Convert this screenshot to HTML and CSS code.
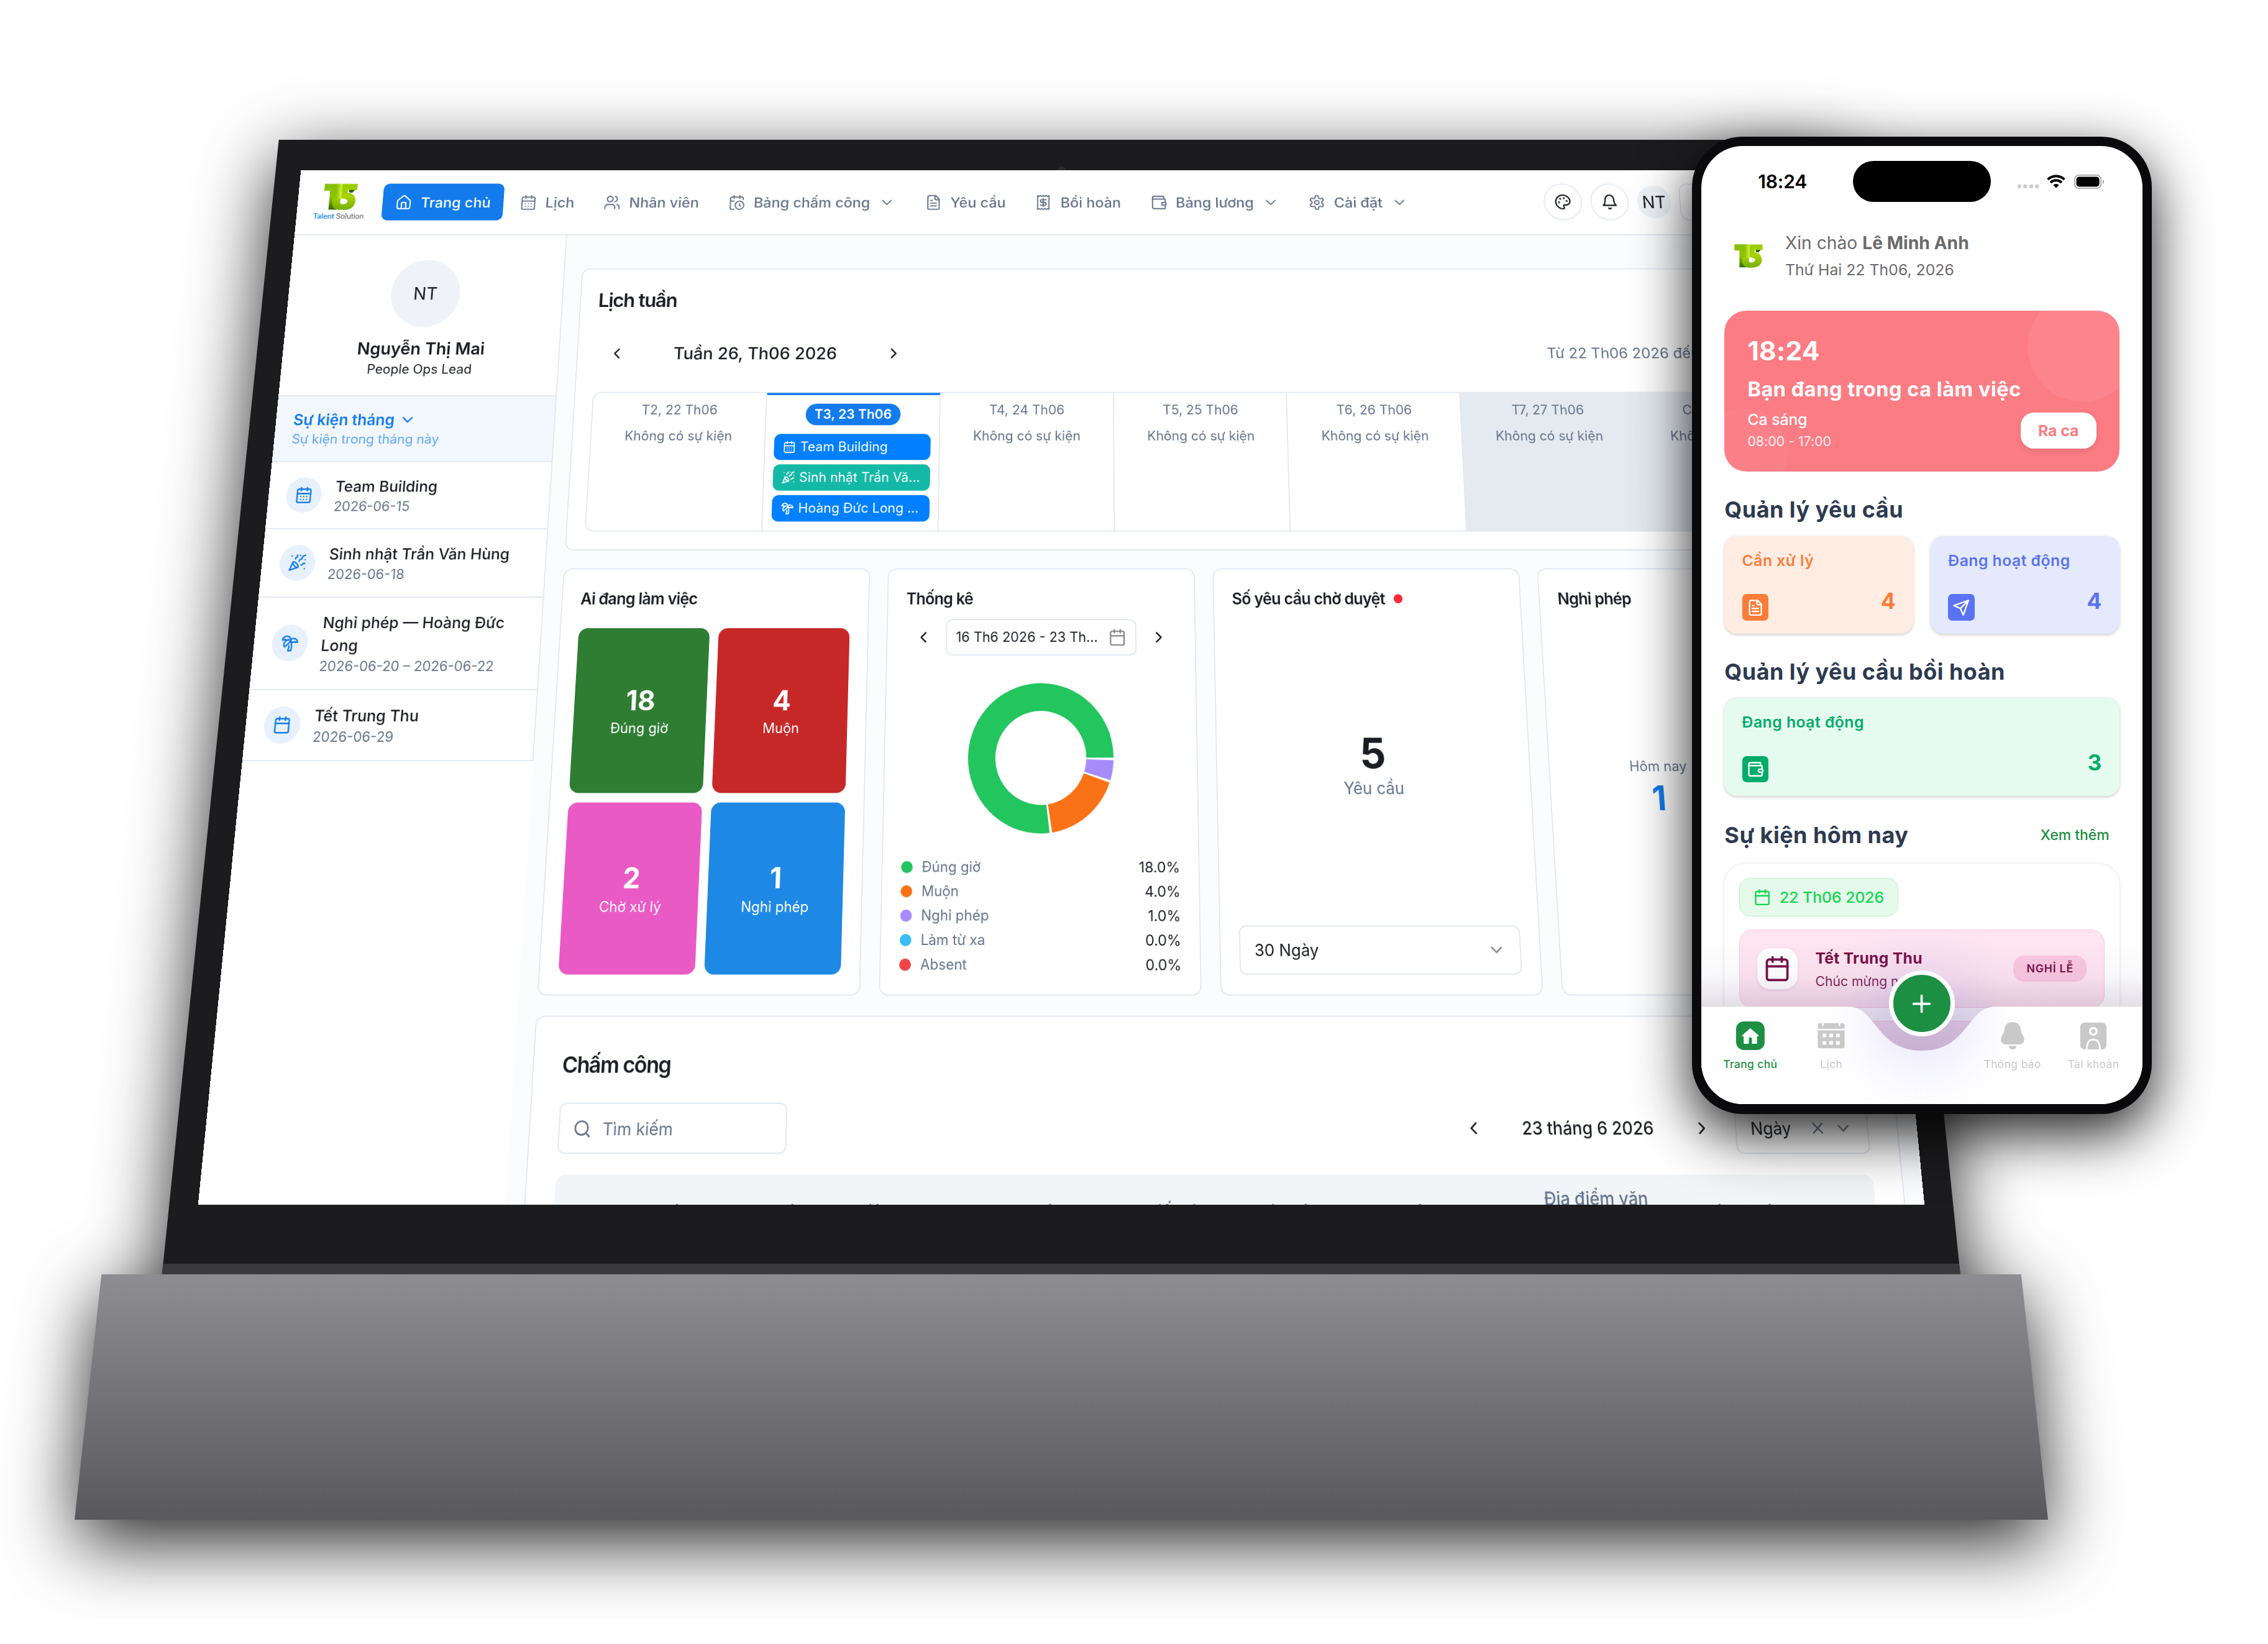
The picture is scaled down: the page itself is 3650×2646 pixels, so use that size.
FILE: index.html
```html
<!DOCTYPE html>
<html lang="vi">
<head>
<meta charset="utf-8">
<title>Talent Solution</title>
<link rel="stylesheet" href="styles.css">
</head>
<body>
<svg class="sprite" aria-hidden="true">
  <symbol id="home" viewBox="0 0 24 24"><path d="M15 21v-8a1 1 0 0 0-1-1h-4a1 1 0 0 0-1 1v8"/><path d="M3 10a2 2 0 0 1 .709-1.528l7-6a2 2 0 0 1 2.582 0l7 6A2 2 0 0 1 21 10v9a2 2 0 0 1-2 2H5a2 2 0 0 1-2-2z"/></symbol>
  <symbol id="cal" viewBox="0 0 24 24"><path d="M8 2v4M16 2v4M3 10h18"/><rect x="3" y="4" width="18" height="18" rx="2"/></symbol>
  <symbol id="caldays" viewBox="0 0 24 24"><path d="M8 2v4M16 2v4M3 10h18M8 14h.01M12 14h.01M16 14h.01M8 18h.01M12 18h.01M16 18h.01"/><rect x="3" y="4" width="18" height="18" rx="2"/></symbol>
  <symbol id="users" viewBox="0 0 24 24"><path d="M16 21v-2a4 4 0 0 0-4-4H6a4 4 0 0 0-4 4v2M22 21v-2a4 4 0 0 0-3-3.87M16 3.13a4 4 0 0 1 0 7.75"/><circle cx="9" cy="7" r="4"/></symbol>
  <symbol id="calclock" viewBox="0 0 24 24"><path d="M21 7.5V6a2 2 0 0 0-2-2H5a2 2 0 0 0-2 2v14a2 2 0 0 0 2 2h3.5M16 2v4M8 2v4M3 10h5M17.5 17.5 16 16.3V14"/><circle cx="16" cy="16" r="6"/></symbol>
  <symbol id="file" viewBox="0 0 24 24"><path d="M15 2H6a2 2 0 0 0-2 2v16a2 2 0 0 0 2 2h12a2 2 0 0 0 2-2V7Z"/><path d="M14 2v4a2 2 0 0 0 2 2h4M10 9H8M16 13H8M16 17H8"/></symbol>
  <symbol id="receipt" viewBox="0 0 24 24"><path d="M4 2v20l2-1 2 1 2-1 2 1 2-1 2 1 2-1 2 1V2l-2 1-2-1-2 1-2-1-2 1-2-1-2 1Z"/><path d="M16 8h-6a2 2 0 1 0 0 4h4a2 2 0 1 1 0 4H8M12 17.5v-11"/></symbol>
  <symbol id="wallet" viewBox="0 0 24 24"><path d="M19 7V4a1 1 0 0 0-1-1H5a2 2 0 0 0 0 4h15a1 1 0 0 1 1 1v4h-3a2 2 0 0 0 0 4h3a1 1 0 0 0 1-1v-2a1 1 0 0 0-1-1"/><path d="M3 5v14a2 2 0 0 0 2 2h15a1 1 0 0 0 1-1v-4"/></symbol>
  <symbol id="gear" viewBox="0 0 24 24"><path d="M12.22 2h-.44a2 2 0 0 0-2 2v.18a2 2 0 0 1-1 1.73l-.43.25a2 2 0 0 1-2 0l-.15-.08a2 2 0 0 0-2.73.73l-.22.38a2 2 0 0 0 .73 2.73l.15.1a2 2 0 0 1 1 1.72v.51a2 2 0 0 1-1 1.74l-.15.09a2 2 0 0 0-.73 2.73l.22.38a2 2 0 0 0 2.73.73l.15-.08a2 2 0 0 1 2 0l.43.25a2 2 0 0 1 1 1.73V20a2 2 0 0 0 2 2h.44a2 2 0 0 0 2-2v-.18a2 2 0 0 1 1-1.73l.43-.25a2 2 0 0 1 2 0l.15.08a2 2 0 0 0 2.73-.73l.22-.39a2 2 0 0 0-.73-2.73l-.15-.08a2 2 0 0 1-1-1.74v-.5a2 2 0 0 1 1-1.74l.15-.09a2 2 0 0 0 .73-2.73l-.22-.38a2 2 0 0 0-2.73-.73l-.15.08a2 2 0 0 1-2 0l-.43-.25a2 2 0 0 1-1-1.73V4a2 2 0 0 0-2-2z"/><circle cx="12" cy="12" r="3"/></symbol>
  <symbol id="down" viewBox="0 0 24 24"><path d="m6 9 6 6 6-6"/></symbol>
  <symbol id="left" viewBox="0 0 24 24"><path d="m15 18-6-6 6-6"/></symbol>
  <symbol id="right" viewBox="0 0 24 24"><path d="m9 18 6-6-6-6"/></symbol>
  <symbol id="close" viewBox="0 0 24 24"><path d="M18 6 6 18M6 6l12 12"/></symbol>
  <symbol id="search" viewBox="0 0 24 24"><circle cx="11" cy="11" r="8"/><path d="m21 21-4.3-4.3"/></symbol>
  <symbol id="palette" viewBox="0 0 24 24"><circle cx="13.5" cy="6.5" r=".5"/><circle cx="17.5" cy="10.5" r=".5"/><circle cx="8.5" cy="7.5" r=".5"/><circle cx="6.5" cy="12.5" r=".5"/><path d="M12 2C6.500 2 2 6.500 2 12s4.500 10 10 10c.926 0 1.648-.746 1.648-1.688 0-.437-.18-.835-.437-1.125-.29-.289-.438-.652-.438-1.125a1.640 1.640 0 0 1 1.668-1.668h1.996c3.051 0 5.555-2.503 5.555-5.554C21.965 6.012 17.461 2 12 2z"/></symbol>
  <symbol id="bell" viewBox="0 0 24 24"><path d="M6 8a6 6 0 0 1 12 0c0 7 3 9 3 9H3s3-2 3-9M10.300 21a1.940 1.940 0 0 0 3.400 0"/></symbol>
  <symbol id="party" viewBox="0 0 24 24"><path d="M5.800 11.300 2 22l10.700-3.790M4 3h.01M22 8h.01M15 2h.01M22 20h.01"/><path d="m22 2-2.240.75a2.900 2.900 0 0 0-1.960 3.120c.1.86-.57 1.630-1.450 1.630h-.38c-.86 0-1.600.6-1.760 1.440L14 10M22 13l-.82-.33c-.86-.34-1.820.2-1.980 1.110c-.11.7-.72 1.220-1.430 1.220H17M11 2l.33.82c.34.86-.2 1.820-1.110 1.980C9.520 4.900 9 5.520 9 6.230V7"/><path d="M11 13c1.930 1.930 2.830 4.170 2 5-.83.83-3.070-.07-5-2-1.930-1.930-2.830-4.170-2-5 .83-.83 3.070.07 5 2Z"/></symbol>
  <symbol id="palm" viewBox="0 0 24 24"><path d="M13 8c0-2.760-2.460-5-5.500-5S2 5.240 2 8h2l1-1 1 1h4"/><path d="M13 7.140A5.820 5.820 0 0 1 16.500 6c3.040 0 5.500 2.240 5.500 5h-3l-1-1-1 1h-3"/><path d="M5.890 9.710c-2.150 2.150-2.300 5.470-.35 7.430l4.240-4.250.7-.7.71-.71 2.120-2.120c-1.950-1.960-5.270-1.800-7.420.35"/><path d="M11 15.500c.5 2.500-.17 4.500-1 6.500h4c2-5.500-.5-12-1-14"/></symbol>
  <symbol id="send" viewBox="0 0 24 24"><path d="m22 2-7 20-4-9-9-4ZM22 2 11 13"/></symbol>
  <symbol id="logo" viewBox="0 0 31 26">
    <defs>
      <linearGradient id="lg1" x1="0" y1="0" x2="0" y2="1"><stop offset="0" stop-color="#84bd00"/><stop offset=".5" stop-color="#8fc400"/><stop offset="1" stop-color="#2f6d0a"/></linearGradient>
      <linearGradient id="lg2" x1="0" y1="0" x2="0" y2="1"><stop offset="0" stop-color="#9ccc00"/><stop offset=".5" stop-color="#a3d300"/><stop offset="1" stop-color="#74ae00"/></linearGradient>
      <linearGradient id="lg3" x1="0" y1="0" x2="1" y2="0"><stop offset="0" stop-color="#8cc400"/><stop offset="1" stop-color="#d6ef4a"/></linearGradient>
    </defs>
    <path fill="url(#lg1)" stroke="none" d="M0 .2H13V25.500H5.500V7H0z"/>
    <path fill="#1f5a12" d="M23.500 6H29l-2.400 3-3.100-.4z"/>
    <path fill="url(#lg2)" fill-rule="evenodd" d="M15.500.3H31V6.300H23.200c-.7 0-1 .4-1 1V9C27.200 9.300 30.200 12.300 30.200 17.200 30.200 22.500 26.300 25.800 20 25.800H16C11 25.800 8.500 22.500 8.500 18V14H15.500zM17.600 14.200c-1 .8-1.900 2.200-1.900 3.600 0 1.600 1.100 2.400 3 2.400 2.400 0 4-.9 4-2.700 0-1.900-1.700-2.300-3.200-2.500z"/>
    <path fill="url(#lg3)" d="M11.500.3h5.200V15.500c-2.400-.4-5.200-2-5.200-6z"/>
  </symbol>
</svg>

<main class="stage">
  <div class="laptop-shadow"><div class="laptop">
    <div class="lid"></div>
    <div class="hinge"></div>
    <div class="base"></div>
    <span class="camera"></span>
  </div></div>

  <div class="screen"><div class="app">
    <header class="topbar">
      <div class="brand"><svg class="brand-mark"><use href="#logo"/></svg><span class="brand-name"><b>Talent</b> Solution</span></div>
      <nav class="menu">
        <a class="menu-item active"><svg class="ic"><use href="#home"/></svg>Trang chủ</a>
        <a class="menu-item"><svg class="ic"><use href="#caldays"/></svg>Lịch</a>
        <a class="menu-item"><svg class="ic"><use href="#users"/></svg>Nhân viên</a>
        <a class="menu-item"><svg class="ic"><use href="#calclock"/></svg>Bảng chấm công<svg class="ic"><use href="#down"/></svg></a>
        <a class="menu-item"><svg class="ic"><use href="#file"/></svg>Yêu cầu</a>
        <a class="menu-item"><svg class="ic"><use href="#receipt"/></svg>Bồi hoàn</a>
        <a class="menu-item"><svg class="ic"><use href="#wallet"/></svg>Bảng lương<svg class="ic"><use href="#down"/></svg></a>
        <a class="menu-item"><svg class="ic"><use href="#gear"/></svg>Cài đặt<svg class="ic"><use href="#down"/></svg></a>
      </nav>
      <div class="tools">
        <span class="round"><svg class="ic"><use href="#palette"/></svg></span>
        <span class="round"><svg class="ic"><use href="#bell"/></svg></span>
        <span class="mini">NT</span>
        <span class="lang"></span>
      </div>
    </header>

    <div class="body">
      <aside class="side">
        <div class="side-list">
          <div class="profile"><span class="avatar">NT</span><strong>Nguyễn Thị Mai</strong><small>People Ops Lead</small></div>
          <div class="month"><strong>Sự kiện tháng <svg class="ic"><use href="#down"/></svg></strong><small>Sự kiện trong tháng này</small></div>
          <div class="event"><span class="dot"><svg class="ic"><use href="#caldays"/></svg></span><div><strong>Team Building</strong><small>2026-06-15</small></div></div>
          <div class="event"><span class="dot"><svg class="ic"><use href="#party"/></svg></span><div><strong>Sinh nhật Trần Văn Hùng</strong><small>2026-06-18</small></div></div>
          <div class="event"><span class="dot"><svg class="ic"><use href="#palm"/></svg></span><div><strong>Nghỉ phép — Hoàng Đức<br>Long</strong><small>2026-06-20 – 2026-06-22</small></div></div>
          <div class="event"><span class="dot"><svg class="ic"><use href="#cal"/></svg></span><div><strong>Tết Trung Thu</strong><small>2026-06-29</small></div></div>
        </div>
      </aside>

      <div class="content">
        <section class="card week">
          <h2>Lịch tuần</h2>
          <div class="weeknav">
            <div class="pager"><span class="pg"><svg class="ic"><use href="#left"/></svg></span><b>Tuần 26, Th06 2026</b><span class="pg"><svg class="ic"><use href="#right"/></svg></span></div>
            <span class="range">Từ 22 Th06 2026 đến 28 Th06 2026</span>
          </div>
          <div class="days">
            <div class="day"><span>T2, 22 Th06</span><span>Không có sự kiện</span></div>
            <div class="day today"><b>T3, 23 Th06</b>
              <div class="chip"><svg class="ic"><use href="#caldays"/></svg><span>Team Building</span></div>
              <div class="chip teal"><svg class="ic"><use href="#party"/></svg><span>Sinh nhật Trần Vă...</span></div>
              <div class="chip"><svg class="ic"><use href="#palm"/></svg><span>Hoàng Đức Long ...</span></div>
            </div>
            <div class="day"><span>T4, 24 Th06</span><span>Không có sự kiện</span></div>
            <div class="day"><span>T5, 25 Th06</span><span>Không có sự kiện</span></div>
            <div class="day"><span>T6, 26 Th06</span><span>Không có sự kiện</span></div>
            <div class="day off"><span>T7, 27 Th06</span><span>Không có sự kiện</span></div>
            <div class="day off"><span>CN, 28 Th06</span><span>Không có sự kiện</span></div>
          </div>
        </section>

        <div class="cards">
          <section class="card stat">
            <h3>Ai đang làm việc</h3>
            <div class="tiles">
              <div class="tile green"><b>18</b><span>Đúng giờ</span></div>
              <div class="tile red"><b>4</b><span>Muộn</span></div>
              <div class="tile pink"><b>2</b><span>Chờ xử lý</span></div>
              <div class="tile blue"><b>1</b><span>Nghỉ phép</span></div>
            </div>
          </section>
          <section class="card stat">
            <h3>Thống kê</h3>
            <div class="daterow"><span class="pg"><svg class="ic"><use href="#left"/></svg></span><span class="datebox"><span>16 Th6 2026 - 23 Th...</span><svg class="ic"><use href="#cal"/></svg></span><span class="pg"><svg class="ic"><use href="#right"/></svg></span></div>
            <svg class="donut" viewBox="-65 -65 130 130">
              <path fill="#22c55e" d="M64 0A64 64 0 1 0 7.800 63.520L4.870 39.700A40 40 0 1 1 40 0Z"/>
              <path fill="#f97316" d="M10.010 63.210A64 64 0 0 0 60.370 21.260L37.730 13.290A40 40 0 0 1 6.260 39.510Z"/>
              <path fill="#a78bfa" d="M61.070 19.140A64 64 0 0 0 63.960 2.230L39.980 1.400A40 40 0 0 1 38.170 11.960Z"/>
            </svg>
            <ul class="legend">
              <li><i class="c1"></i>Đúng giờ<b>18.0%</b></li>
              <li><i class="c2"></i>Muộn<b>4.0%</b></li>
              <li><i class="c3"></i>Nghỉ phép<b>1.0%</b></li>
              <li><i class="c4"></i>Làm từ xa<b>0.0%</b></li>
              <li><i class="c5"></i>Absent<b>0.0%</b></li>
            </ul>
          </section>
          <section class="card stat">
            <h3>Số yêu cầu chờ duyệt <i class="alert"></i></h3>
            <div class="total"><b>5</b><span>Yêu cầu</span></div>
            <div class="select">30 Ngày<svg class="ic"><use href="#down"/></svg></div>
          </section>
          <section class="card stat">
            <h3>Nghỉ phép</h3>
            <div class="leave"><div><span>Hôm nay</span><b>1</b></div></div>
          </section>
        </div>

        <section class="card attend">
          <h2>Chấm công</h2>
          <div class="filters">
            <div class="searchbox"><svg class="ic"><use href="#search"/></svg>Tìm kiếm</div>
            <div class="filters-right">
              <div class="pager"><span class="pg"><svg class="ic"><use href="#left"/></svg></span><b>23 tháng 6 2026</b><span class="pg"><svg class="ic"><use href="#right"/></svg></span></div>
              <div class="mode">Ngày<svg class="ic x"><use href="#close"/></svg><svg class="ic"><use href="#down"/></svg></div>
            </div>
          </div>
          <div class="thead"><span>Ca làm</span><span>Phòng ban hiện</span><span>Thực làm</span><span>Thiết bị</span><span>Ghi chú</span><span>Nhóm</span><span>Địa điểm văn phòng</span><span>Hình thức</span></div>
        </section>
      </div>
    </div>
  </div></div>

  <div class="phone"><div class="display">
    <div class="status">
      <b>18:24</b><span class="island"></span>
      <span class="signal"><i></i><i></i><i></i><i></i></span>
      <svg class="wifi" viewBox="0 0 17 12.500"><path d="M8.500 12.300 5.900 9.500a3.800 3.800 0 0 1 5.200 0z" fill="#000"/><path d="M3.400 7.300a7.300 7.300 0 0 1 10.200 0M.9 4.500a10.900 10.900 0 0 1 15.200 0" fill="none" stroke="#000" stroke-width="2.200"/></svg>
      <svg class="battery" viewBox="0 0 27.500 13"><rect x=".5" y=".5" width="24" height="12" rx="3.800" fill="none" stroke="#a6a6a6"/><rect x="2" y="2" width="21" height="9" rx="2.500" fill="#000"/><path d="M26 4.500v4c.8-.3 1.300-1.100 1.300-2s-.5-1.700-1.300-2z" fill="#a6a6a6"/></svg>
    </div>
    <div class="hello"><svg class="hello-logo"><use href="#logo"/></svg><div><p>Xin chào <b>Lê Minh Anh</b></p><small>Thứ Hai 22 Th06, 2026</small></div></div>
    <section class="shift">
      <b class="clock">18:24</b><b class="state">Bạn đang trong ca làm việc</b><span class="name">Ca sáng</span><span class="hours">08:00 - 17:00</span>
      <button class="leave-btn">Ra ca</button>
    </section>
    <h4>Quản lý yêu cầu</h4>
    <div class="pair">
      <div class="box orange"><span>Cần xử lý</span><div><i><svg class="ic"><use href="#file"/></svg></i><b>4</b></div></div>
      <div class="box indigo"><span>Đang hoạt động</span><div><i><svg class="ic"><use href="#send"/></svg></i><b>4</b></div></div>
    </div>
    <h4>Quản lý yêu cầu bồi hoàn</h4>
    <div class="pair">
      <div class="box mint"><span>Đang hoạt động</span><div><i><svg class="ic"><use href="#wallet"/></svg></i><b>3</b></div></div>
    </div>
    <h4 class="last">Sự kiện hôm nay <a>Xem thêm</a></h4>
    <section class="feed">
      <span class="feed-date"><svg class="ic"><use href="#cal"/></svg>22 Th06 2026</span>
      <div class="feed-item"><i><svg class="ic"><use href="#cal"/></svg></i><div><b>Tết Trung Thu</b><span>Chúc mừng ngày lễ</span></div><em>NGHỈ LỄ</em></div>
      <div class="feed-item"></div>
    </section>
    <div class="shade"></div>
    <div class="tabbar">
      <svg class="tab-shape" viewBox="0 0 402 110"><path fill="#fff" d="M0 20H134C144 20 150 26 156 33.400C165 44 174 60 201 60C228 60 237 44 246 33.400C252 26 258 20 268 20H402V110H0Z"/></svg>
      <div class="glow"></div>
      <span class="fab"><svg viewBox="0 0 24 24"><path d="M12 3.600v16.800M3.600 12h16.800"/></svg></span>
      <div class="tabs">
        <div class="tab on"><svg viewBox="0 0 26 26"><rect width="26" height="26" rx="7" fill="#1c8f43"/><path fill="#fff" stroke="#fff" stroke-width="1.200" stroke-linejoin="round" d="M13 6.900 6 13h1.500v6.800H11v-4c0-2.600 4-2.600 4 0v4h3.500V13H20z"/></svg><span>Trang chủ</span></div>
        <div class="tab"><svg viewBox="0 0 26 26"><path fill="#c9c9c9" d="M.8 3.500a2 2 0 0 1 2-2h1.800v2.800h1.500V1.500h13.800v2.800h1.500V1.500h1.800a2 2 0 0 1 2 2v3.200H.8zM.8 8.200h24.400v14.300a2 2 0 0 1-2 2H2.800a2 2 0 0 1-2-2z"/><path fill="#fff" d="M5.200 11.200h3.400v3.300H5.200zM11.300 11.200h3.400v3.300h-3.400zM17.400 11.200h3.400v3.300h-3.400zM5.200 18h3.400v3.300H5.200zM11.300 18h3.400v3.300h-3.400zM17.400 18h3.400v3.300h-3.400z"/></svg><span>Lịch</span></div>
        <div class="tab gap"></div>
        <div class="tab"><svg viewBox="0 0 26 26"><path fill="#c9c9c9" d="M13 .5C17.800.5 20.500 4 20.700 8.500 20.800 11.500 23.600 13 23.600 16.400 23.600 19.400 21.800 20.900 18.800 20.900H7.200C4.200 20.900 2.400 19.400 2.400 16.400 2.400 13 5.200 11.500 5.300 8.500 5.500 4 8.200.5 13 .5zM9.500 22.300h7c0 2-1.600 3.300-3.500 3.300s-3.500-1.300-3.500-3.300z"/></svg><span>Thông báo</span></div>
        <div class="tab"><svg viewBox="0 0 26 26"><rect x="1" y="1" width="24" height="24.500" rx="4" fill="#c9c9c9"/><circle cx="13" cy="9" r="3" fill="none" stroke="#fff" stroke-width="2"/><path d="M7 25.500c0-5.500 2-9 6-9s6 3.500 6 9" fill="none" stroke="#fff" stroke-width="1.500"/></svg><span>Tài khoản</span></div>
      </div>
    </div>
  </div></div>
</main>
</body>
</html>
```

FILE: styles.css
```css
* { box-sizing: border-box; }
body, h2, h3, h4, p, ul { margin: 0; padding: 0; }
body { background: #fff; font-family: Inter, "Noto Sans", sans-serif; color: #1a1d23; overflow: hidden; }
b, strong { font-weight: 600; }
i, em { font-style: normal; }
.sprite { position: absolute; width: 0; height: 0; }
.ic { width: 16px; height: 16px; flex: none; fill: none; stroke: currentColor; stroke-width: 2; stroke-linecap: round; stroke-linejoin: round; display: block; }
.stage { position: relative; width: 3650px; height: 2646px; overflow: hidden; }

/* laptop body */
.laptop-shadow { position: absolute; left: 0; top: 0; width: 3650px; height: 2606px; overflow: hidden; }
.laptop { position: relative; width: 3650px; height: 2646px; filter: drop-shadow(0 35px 60px rgba(0,0,0,.87)); }
.lid, .hinge, .base { position: absolute; left: 0; top: 0; width: 3650px; height: 2646px; }
.lid { background: #1c1c1e; clip-path: polygon(448.700px 225px, 2967.300px 225px, 3154.800px 2051px, 260.800px 2051px); }
.hinge { background: #3a3a3c; clip-path: polygon(262.600px 2034px, 3153px 2034px, 3154.800px 2051px, 260.800px 2051px); }
.base { background: linear-gradient(#8e8d92 2051px, #59585c 2446px); clip-path: polygon(163.300px 2051px, 3252.700px 2051px, 3296px 2446px, 120px 2446px); }
.camera { position: absolute; left: 1702px; top: 268px; width: 13px; height: 13px; border-radius: 50%; background: #2c2c2f; }

/* tilted display: laid out at 1440x900, drawn at double density */
.screen { position: absolute; left: 0; top: 0; width: 2880px; height: 1800px; overflow: hidden; background: #fff; transform-origin: 0 0;
  transform: matrix3d(0.84972, 0, 0, 0, -0.1131125, 0.79672, 0, -0.000066225, 0, 0, 1, 0, 484.4, 273.5, 0, 1); }
.app { zoom: 2; width: 1440px; height: 900px; display: flex; flex-direction: column; background: #fbfcfe; font-size: 14px; line-height: 20px; overflow: hidden; }

.topbar { height: 64px; flex: none; display: flex; align-items: center; background: #fff; border-bottom: 1px solid #e2e8f0; padding: 0 0 0 16px; }
.brand { width: 48px; margin-right: 16px; display: flex; flex-direction: column; align-items: center; padding-right: 1px; }
.brand-mark { width: 31px; height: 26px; display: block; }
.brand-name { font-size: 6.900px; line-height: 8px; margin-top: 2px; color: #6e6e6e; font-weight: 500; white-space: nowrap; letter-spacing: -.1px; }
.brand-name b { color: #2f8fe8; }
.menu { display: flex; gap: 3.600px; }
.menu-item { height: 36px; padding: .5px 12px 0; display: flex; align-items: center; gap: 8px; border-radius: 6px; font-size: 13.700px; font-weight: 500; color: #64748b; white-space: nowrap; }
.menu-item .ic { stroke-width: 1.750; }
.menu-item.active { background: #137bec; color: #fff; }
.tools { margin-left: auto; display: flex; align-items: center; gap: 8px; }
.round { width: 36px; height: 36px; border: 1px solid #e2e8f0; border-radius: 50%; display: grid; place-items: center; }
.mini { width: 32px; height: 32px; border-radius: 50%; background: #eff3f8; display: grid; place-items: center; font-size: 16px; padding-top: .8px; }
.lang { width: 137px; height: 36px; border: 1px solid #e2e8f0; border-radius: 8px; border-right: 0; }

.body { flex: 1; display: flex; min-height: 0; }
.side { width: 256px; flex: none; background: #fff; }
.side-list { border-right: 1px solid #e2e8f0; }
.side small { display: block; font-size: 12.200px; line-height: 16px; }
.profile { height: 153px; padding-top: 24px; display: flex; flex-direction: column; align-items: center; border-bottom: 1px solid #e2e8f0; }
.avatar { width: 64px; height: 64px; border-radius: 50%; background: #eff3f8; display: grid; place-items: center; font-size: 16px; padding-top: 1px; margin-bottom: 8px; }
.profile strong { font-size: 15.600px; line-height: 25.500px; margin-bottom: -1.500px; }
.profile small { font-size: 12px; }
.month { height: 61px; padding: 12px 16px; background: #f2f7fe; border-bottom: 1px solid #e2e8f0; color: #137bec; }
.month strong { display: flex; align-items: center; gap: 4px; }
.month small { color: #5ea6f4; font-size: 12px; }
.event { display: flex; align-items: center; gap: 12px; padding: 12px 16px; border-bottom: 1px solid #e2e8f0; }
.event strong { display: block; font-weight: 500; font-size: 13.750px; }
.event small { color: #64748b; }
.dot { width: 32px; height: 32px; flex: none; border-radius: 50%; background: #e7f1fd; color: #137bec; display: grid; place-items: center; }

.content { flex: 1; padding: 32px 16px 0; display: flex; flex-direction: column; gap: 16px; }
.card { background: #fff; border: 1px solid #e2e8f0; border-radius: 8px; flex: none; }
h2 { font-size: 18px; line-height: 28px; font-weight: 600; letter-spacing: -.8px; }
h3 { font-size: 14px; line-height: 20px; font-weight: 600; letter-spacing: -.4px; display: flex; align-items: center; }
.week { height: 262px; padding: 16px; }
.weeknav { height: 40px; margin: 16px 0 17px; display: flex; align-items: center; justify-content: space-between; }
.week h2 { line-height: 27px; letter-spacing: -.72px; }
.pager { display: flex; align-items: center; }
.pager b { width: 216px; text-align: center; font-size: 15.600px; font-weight: 500; }
.pg { width: 40px; height: 32px; display: grid; place-items: center; }
.weeknav .pager { padding-top: 1.600px; }
.range { color: #64748b; font-size: 13.750px; padding-top: 1.300px; }
.days { height: 128px; display: grid; grid-template-columns: repeat(7, 1fr); border: 1px solid #e2e8f0; border-radius: 8px; overflow: hidden; }
.day { padding: 8px 7.400px 0 8px; border-right: 1px solid #e2e8f0; display: flex; flex-direction: column; gap: 8px; align-items: center; color: #64748b; font-size: 12px; line-height: 16px; min-width: 0; white-space: nowrap; }
.day:last-child { border-right: 0; }
.day.off { background: #e5eaf1; }
.day.today { border-top: 2px solid #137bec; gap: 4px; }
.today b { background: #137bec; color: #fff; border-radius: 10px; padding: 2px 8px; margin-bottom: 4px; }
.chip { width: 100%; height: 24px; border-radius: 6px; padding: 0 8px; background: #0080ff; color: #fff; display: flex; align-items: center; gap: 4px; }
.chip.teal { background: #14b8a6; }
.chip .ic { width: 12px; height: 12px; }

.cards { display: grid; grid-template-columns: repeat(4, 276px); gap: 16px; flex: none; }
.stat { height: 362px; padding: 16px; display: flex; flex-direction: column; }
.tiles { margin-top: 16px; display: grid; grid-template-columns: 1fr 1fr; grid-auto-rows: 142px; gap: 8px; }
.tile { border-radius: 8px; display: flex; flex-direction: column; align-items: center; justify-content: center; color: #fff; font-size: 12px; line-height: 16px; }
.tile b { font-size: 24px; line-height: 32px; font-weight: 700; }
.green { background: #2e7d32; } .red { background: #c62828; } .pink { background: #ea5ac5; } .blue { background: #1e88e5; }
.daterow { margin-top: 8px; display: flex; justify-content: center; gap: 4px; }
.daterow .pg { width: 32px; }
.datebox { width: 170px; height: 32px; border: 1px solid #e2e8f0; border-radius: 6px; padding: 0 8px; display: flex; align-items: center; justify-content: space-between; font-size: 12px; }
.datebox .ic { color: #808080; stroke-width: 1.800; }
.donut { width: 130px; height: 130px; margin: 23px auto 19px; display: block; }
.legend { list-style: none; padding: 0; display: flex; flex-direction: column; gap: 4px; font-size: 12px; line-height: 16px; color: #64748b; }
.legend li { display: flex; align-items: center; }
.legend i { width: 10px; height: 10px; border-radius: 50%; margin-right: 8px; }
.legend b { margin-left: auto; color: #1a1d23; font-weight: 400; font-size: 12.400px; }
.c1 { background: #22c55e; } .c2 { background: #f97316; } .c3 { background: #a78bfa; } .c4 { background: #38bdf8; } .c5 { background: #ef4444; }
.alert { width: 8px; height: 8px; border-radius: 50%; background: #fb2c36; margin-left: 8px; }
.total { flex: 1; display: flex; flex-direction: column; align-items: center; justify-content: center; color: #64748b; }
.total b { font-size: 36px; line-height: 40px; font-weight: 700; color: #1a1d23; }
.select { height: 40px; border: 1px solid #e2e8f0; border-radius: 6px; padding: 0 12px; display: flex; align-items: center; justify-content: space-between; font-size: 13.800px; }
.select .ic { color: #8c8c8c; }
.leave { flex: 1; display: flex; align-items: center; padding-left: 54px; text-align: center; }
.leave span { display: block; font-size: 12px; line-height: 16px; color: #64748b; }
.leave b { display: block; font-size: 29px; line-height: 37px; font-weight: 700; color: #137bec; padding-right: 2px; }

.attend { height: 300px; padding: 24px; }
.filters { height: 40px; margin-top: 16px; display: flex; justify-content: space-between; }
.searchbox { width: 192px; border: 1px solid #e2e8f0; border-radius: 6px; padding: 1px 11px 0; display: flex; align-items: center; gap: 9px; color: #64748b; font-size: 13.800px; }
.filters-right { display: flex; align-items: center; gap: 8px; }
.filters-right .pager b { width: 152px; font-size: 14px; }
.mode { width: 112px; height: 40px; border: 1px solid #e2e8f0; border-radius: 6px; padding: 0 12px; display: flex; align-items: center; gap: 6px; font-size: 13.800px; }
.mode .x { margin-left: auto; width: 15px; color: #64748b; stroke-width: 1.800; }
.mode .ic:last-child { color: #8c8c8c; }
.thead { margin-top: 16px; height: 57px; background: #f1f5f8; border-radius: 8px 8px 0 0; padding-left: 74px; display: grid; grid-template-columns: 104px 191px 117px 93px 119px 128px 135px 1fr; align-items: center; justify-items: start; color: #64748b; font-weight: 500; white-space: nowrap; }
.thead span:nth-child(7) { white-space: normal; width: 100px; }

/* phone */
.phone { zoom: 1.7654; position: absolute; left: 1542.400px; top: 124.500px; width: 419.200px; height: 891px; border-radius: 46px; background: #0a0a0c; padding: 8.700px; box-shadow: 0 18px 52px rgba(0,0,0,.88); }
.display { position: relative; width: 401.800px; height: 873.600px; border-radius: 38px; background: #fff; overflow: hidden; padding: 0 21px; }
.status { height: 54px; position: relative; }
.status > * { position: absolute; }
.status b { left: 30.500px; top: 22.800px; font-size: 17px; line-height: 20px; color: #000; letter-spacing: -.1px; }
.island { left: 117px; top: 13.700px; width: 126px; height: 37px; border-radius: 19px; background: #000; }
.signal { left: 267px; top: 35px; display: flex; gap: 1.900px; }
.signal i { width: 3.500px; height: 3.500px; border-radius: 1.200px; background: #ccc; }
.wifi { left: 294px; top: 26.200px; width: 17px; height: 12.500px; }
.battery { left: 318.500px; top: 26px; width: 27.500px; height: 13px; }
.hello { height: 96px; padding: 22.500px 0 0 9px; display: flex; }
.hello-logo { width: 26px; height: 21.500px; margin: 12.700px 20.300px 0 0; fill: none; }
.hello p { font-size: 16px; line-height: 24px; color: #6b6b6b; }
.hello p b { font-weight: 700; }
.hello small { display: block; font-size: 14px; line-height: 20px; margin-top: 2.500px; color: #6b6b6b; letter-spacing: .03px; }
.shift { position: relative; height: 147px; border-radius: 20px; background: radial-gradient(circle at 326.500px 33px, rgba(255,255,255,.07) 49.700px, transparent 50px), radial-gradient(circle at 18px 129px, rgba(255,255,255,.03) 39.700px, transparent 40px), #fc7c84; padding: 22.100px 21px 0; color: #fff; display: flex; flex-direction: column; }
.clock { font-size: 24px; line-height: 30px; font-weight: 700; margin-bottom: 9px; letter-spacing: .2px; }
.state { font-size: 18.400px; line-height: 22px; font-weight: 700; margin-bottom: 7.400px; letter-spacing: .31px; white-space: nowrap; }
.name { font-size: 14px; line-height: 18px; font-weight: 500; margin-bottom: 2.700px; }
.hours { font-size: 12px; line-height: 16px; opacity: .9; letter-spacing: .05px; }
.leave-btn { position: absolute; right: 21px; bottom: 21px; width: 69px; height: 33px; border: 0; border-radius: 12px; background: #fff; color: #fc7c84; font: 700 14px Inter, sans-serif; padding: 0; box-shadow: 0 2px 6px rgba(0,0,0,.1); }
h4 { font-size: 20.400px; line-height: 28px; font-weight: 700; color: #2d3a50; margin: 20.700px 0 9.900px; display: flex; align-items: center; justify-content: space-between; letter-spacing: .26px; }
h4.last { margin: 22.200px 0 11.700px; }
h4 a { font-size: 13px; font-weight: 500; color: #1c8f43; padding-right: 9px; letter-spacing: 0; }
.pair { display: flex; gap: 16px; }
.box { flex: 1; height: 89px; border-radius: 12px; padding: 13.600px 16px 12px; display: flex; flex-direction: column; justify-content: space-between; font-size: 14px; line-height: 18px; font-weight: 600; box-shadow: 0 1px 3px rgba(0,0,0,.2); }
.box > span { white-space: nowrap; letter-spacing: .28px; }
.box div { display: flex; justify-content: space-between; }
.box i { width: 24px; height: 24px; border-radius: 4px; display: grid; place-items: center; }
.box b { font-size: 20px; line-height: 24px; font-weight: 700; margin-top: -5.600px; }
.orange { background: #ffede4; color: #fd7c38; } .orange i { background: #fd7c38; }
.indigo { background: #e5e9fe; color: #5a73f4; } .indigo i { background: #5a73f4; }
.mint { background: #e6fbf0; color: #00ac69; } .mint i { background: #00ac69; }
.box i .ic { color: #fff; }
.feed { height: 300px; border-radius: 20px; padding: 13.200px; box-shadow: 0 0 3px rgba(0,0,0,.14); }
.feed-date { width: 145px; height: 35px; border: 1px solid #b9f2cb; border-radius: 10px; background: #e5faeb; color: #12d650; display: flex; align-items: center; padding-left: 12.500px; gap: 8px; font-size: 14px; font-weight: 500; }
.feed-item { margin: 12px 0 0; height: 71.500px; border: 1px solid #fccbe2; border-radius: 12px; background: #fee5f0; color: #7a0f45; display: flex; align-items: center; padding: 0 16px; }
.feed-item i { width: 37px; height: 37px; border-radius: 12px; background: #fff; display: grid; place-items: center; box-shadow: 0 1px 3px rgba(0,0,0,.08); margin-right: 16px; }
.feed-item i .ic { width: 25px; height: 25px; }
.feed-item b { display: block; font-size: 14px; line-height: 20px; font-weight: 700; letter-spacing: .16px; }
.feed-item div span { display: block; font-size: 12px; line-height: 16px; margin-top: 3px; opacity: .9; }
.feed-item em { margin-left: auto; height: 24px; line-height: 24px; padding: 0 12px; border-radius: 10px; background: #fac7e0; font-size: 10px; font-weight: 600; letter-spacing: .45px; }
.shade { position: absolute; left: 0; right: 0; top: 724px; height: 110px; background: linear-gradient(rgba(50,20,80,0), rgba(50,20,80,.03) 30%, rgba(50,20,80,.14) 55%, rgba(50,20,80,.22)); }
.tabbar { position: absolute; left: 0; right: 0; bottom: 0; height: 109px; }
.tab-shape { position: absolute; left: 0; top: 0; width: 402px; height: 110px; }
.glow { position: absolute; left: 106px; top: -65px; width: 190px; height: 190px; border-radius: 50%; background: radial-gradient(rgba(120,110,240,.12) 20%, rgba(120,110,240,.07) 35%, rgba(120,110,240,.015) 56%, transparent 70%); }
.fab { position: absolute; left: 170.800px; top: -12.800px; width: 60px; height: 60px; border-radius: 50%; background: #1c8f43; border: 4px solid #fff; display: grid; place-items: center; }
.fab svg { width: 21px; fill: none; stroke: #fff; stroke-width: 2.400; stroke-linecap: round; }
.tabs { position: absolute; left: 0; right: 0; top: 33.500px; display: flex; padding: 0 7.600px; justify-content: space-between; }
.tab { width: 73.700px; display: flex; flex-direction: column; align-items: center; font-size: 9.800px; line-height: 12px; font-weight: 400; letter-spacing: .25px; color: #c9c9c9; }
.tab.gap { width: 91px; }
.tab svg { width: 26px; height: 26px; margin-bottom: 7px; }
.tab.on { color: #1c8f43; font-weight: 500; }
```
